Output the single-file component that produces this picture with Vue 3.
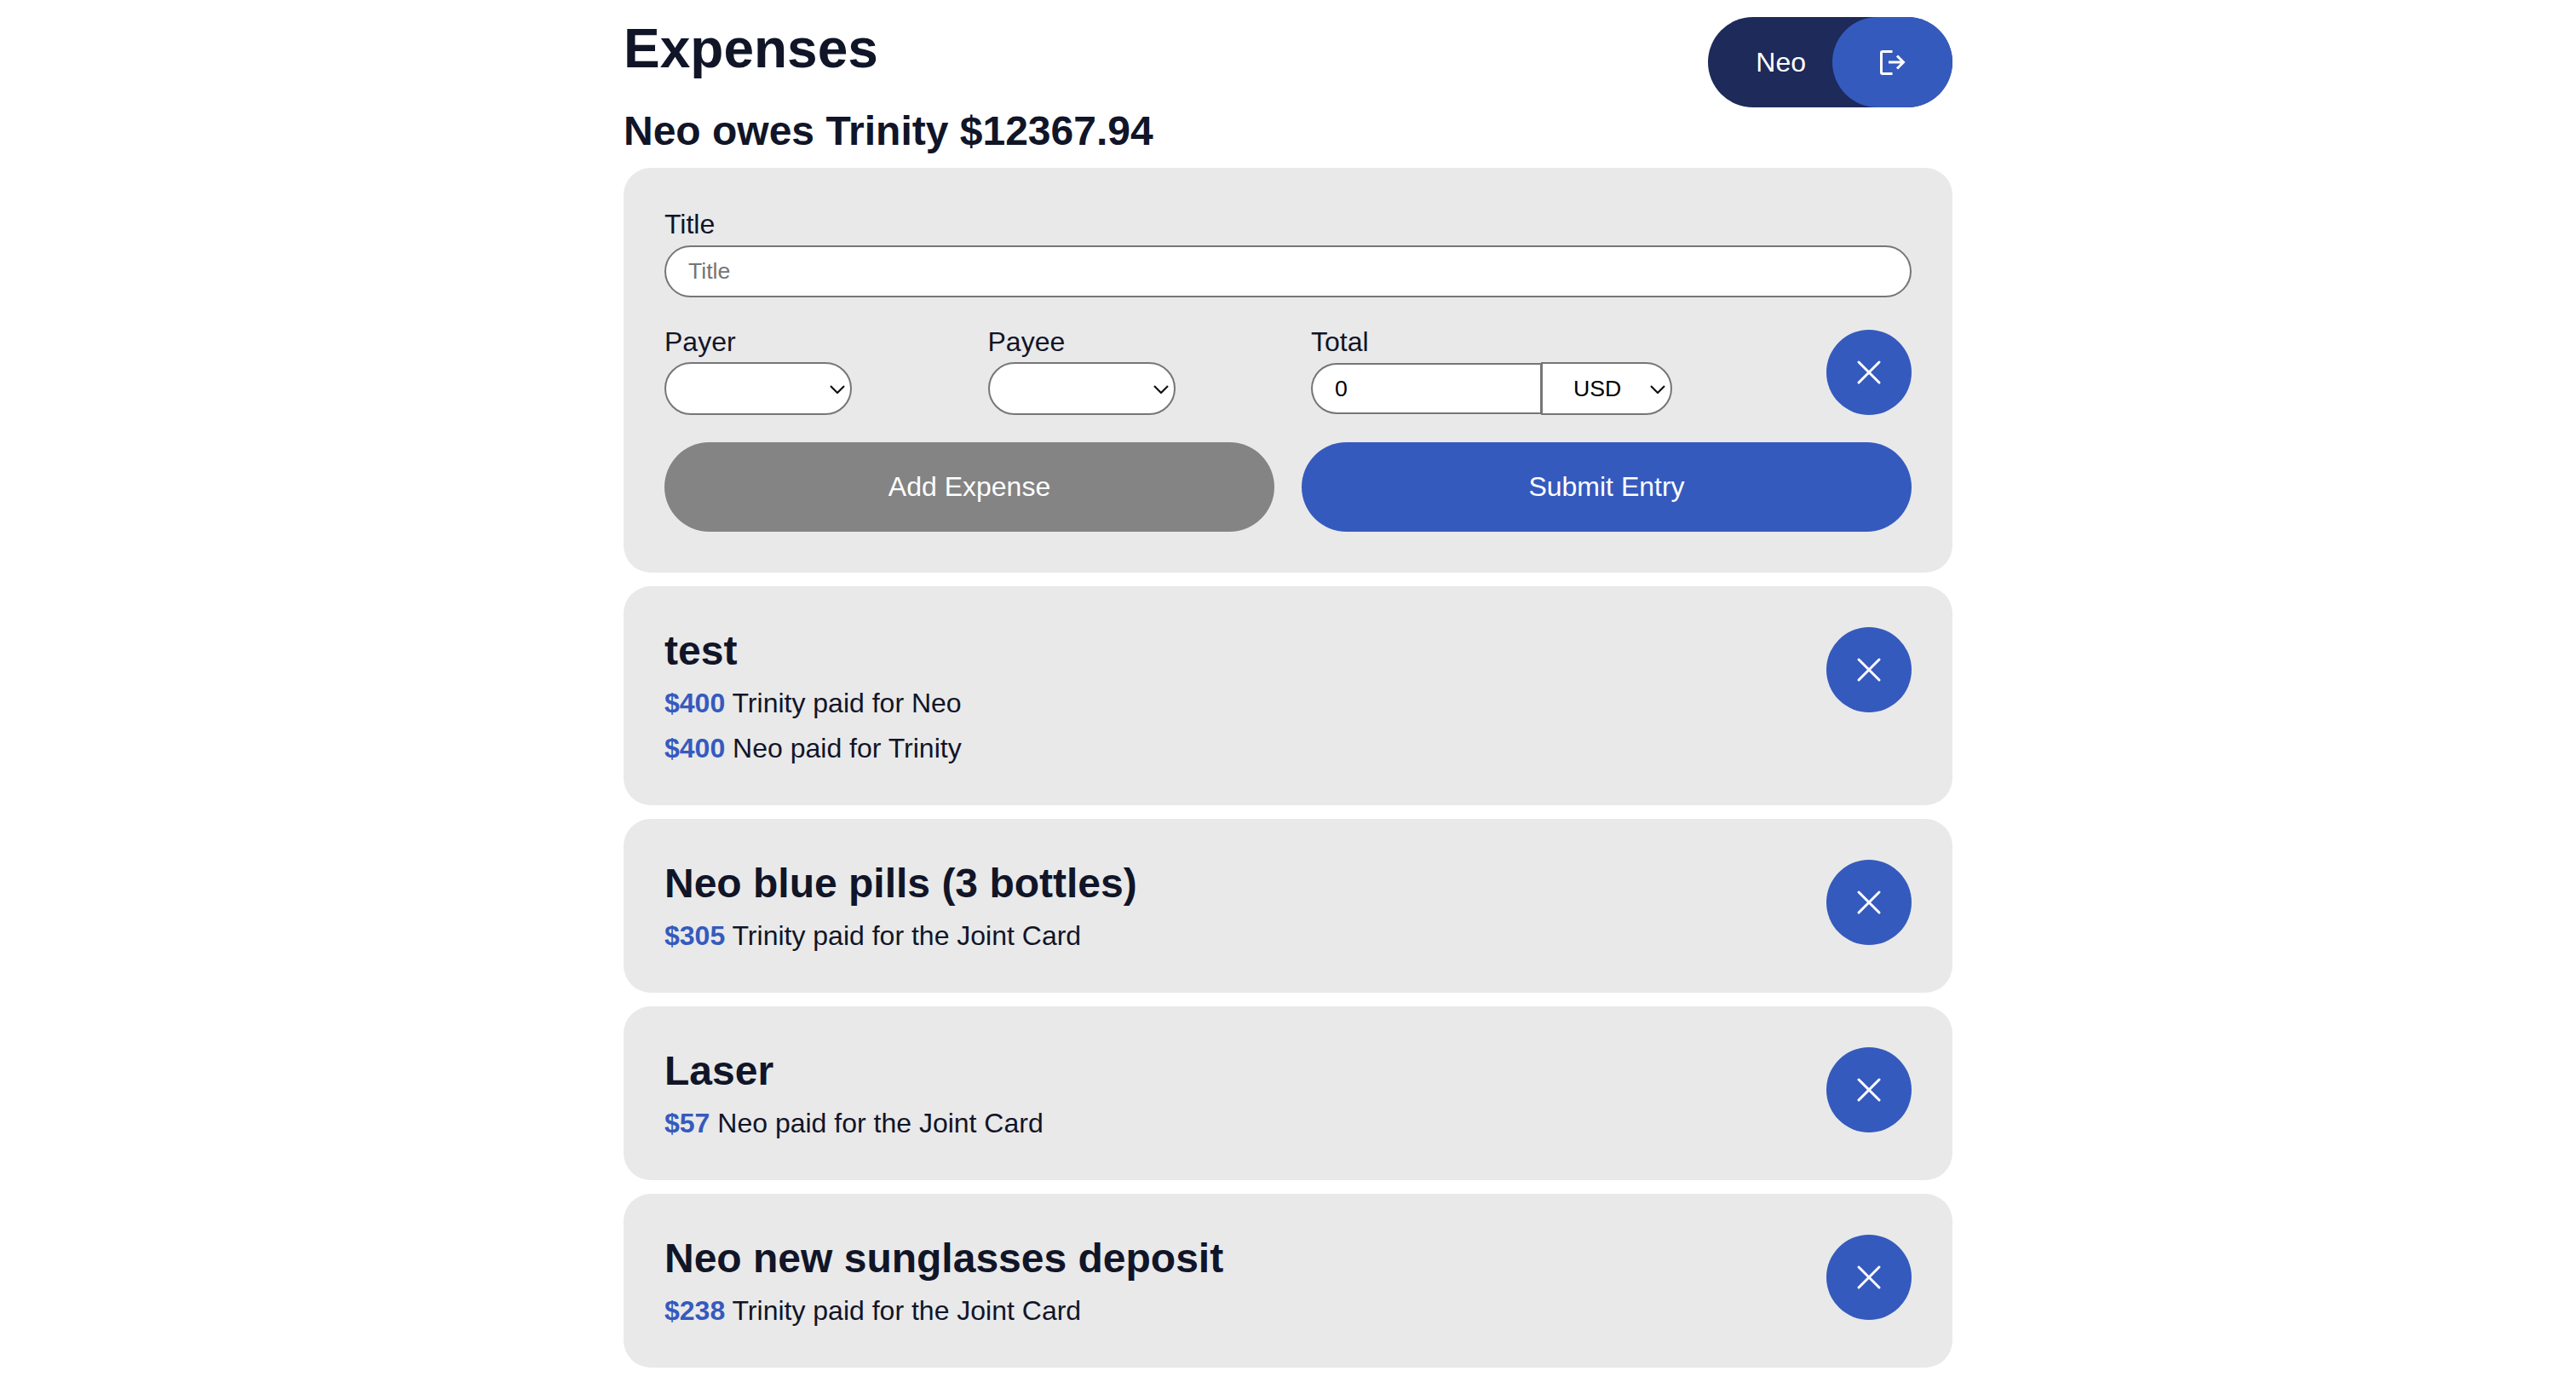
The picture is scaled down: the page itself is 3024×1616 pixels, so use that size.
<script setup>
const expenses = [
  {
    title: 'test',
    lines: [
      { amount: '$400', text: 'Trinity paid for Neo' },
      { amount: '$400', text: 'Neo paid for Trinity' }
    ]
  },
  {
    title: 'Neo blue pills (3 bottles)',
    lines: [{ amount: '$305', text: 'Trinity paid for the Joint Card' }]
  },
  {
    title: 'Laser',
    lines: [{ amount: '$57', text: 'Neo paid for the Joint Card' }]
  },
  {
    title: 'Neo new sunglasses deposit',
    lines: [{ amount: '$238', text: 'Trinity paid for the Joint Card' }]
  }
]
</script>

<template>
  <div class="page">
    <header class="top">
      <h1>Expenses</h1>
      <div class="user-pill">
        <span class="user-name">Neo</span>
        <button class="logout-btn" type="button" aria-label="Log out">
          <svg width="48" height="48" viewBox="0 0 48 48" fill="none" stroke="currentColor" stroke-width="3">
            <path d="M23.5 11.5H12a1.5 1.5 0 0 0-1.500 1.500v23a1.500 1.500 0 0 0 1.500 1.500h11.500" />
            <path d="M19 24h17M29 16.500l7.500 7.500-7.500 7.500" />
          </svg>
        </button>
      </div>
    </header>

    <h2 class="balance">Neo owes Trinity $12367.94</h2>

    <form class="card entry" @submit.prevent>
      <div class="field title-field">
        <label>Title</label>
        <input class="title-input" type="text" placeholder="Title" />
      </div>

      <div class="entry-row">
        <div class="field">
          <label>Payer</label>
          <div class="select-wrap">
            <select class="pill-select">
              <option></option>
            </select>
            <svg class="chevron" width="18" height="10" viewBox="0 0 18 10" fill="none" stroke="#111" stroke-width="2.2">
              <path d="M1 1l8 8 8-8" />
            </svg>
          </div>
        </div>
        <div class="field">
          <label>Payee</label>
          <div class="select-wrap">
            <select class="pill-select">
              <option></option>
            </select>
            <svg class="chevron" width="18" height="10" viewBox="0 0 18 10" fill="none" stroke="#111" stroke-width="2.2">
              <path d="M1 1l8 8 8-8" />
            </svg>
          </div>
        </div>
        <div class="field">
          <label>Total</label>
          <div class="total-group">
            <input class="total-input" type="text" value="0" />
            <div class="select-wrap">
              <select class="currency-select">
                <option>USD</option>
              </select>
              <svg class="chevron" width="18" height="10" viewBox="0 0 18 10" fill="none" stroke="#111" stroke-width="2.2">
                <path d="M1 1l8 8 8-8" />
              </svg>
            </div>
          </div>
        </div>
        <button class="round-btn" type="button" aria-label="Remove">
          <svg width="48" height="48" viewBox="0 0 24 24" fill="none" stroke="currentColor" stroke-width="1.5" stroke-linecap="round">
            <path d="M6 18L18 6M6 6l12 12" />
          </svg>
        </button>
      </div>

      <div class="entry-actions">
        <button class="action add" type="button">Add Expense</button>
        <button class="action submit" type="submit">Submit Entry</button>
      </div>
    </form>

    <section v-for="item in expenses" :key="item.title" class="card expense">
      <div class="expense-info">
        <h2>{{ item.title }}</h2>
        <p v-for="line in item.lines" :key="line.text">
          <strong>{{ line.amount }}</strong> {{ line.text }}
        </p>
      </div>
      <button class="round-btn" type="button" aria-label="Delete">
        <svg width="48" height="48" viewBox="0 0 24 24" fill="none" stroke="currentColor" stroke-width="1.5" stroke-linecap="round">
          <path d="M6 18L18 6M6 6l12 12" />
        </svg>
      </button>
    </section>
  </div>
</template>

<style>
html,
body {
  background: #fff;
  overflow: hidden;
}
</style>

<style scoped>
.page {
  width: 1560px;
  margin: 0 auto;
  padding-top: 20px;
  color: #111528;
  font-family: "Liberation Sans", Arial, sans-serif;
  font-size: 32px;
}

.top {
  display: flex;
  justify-content: space-between;
  align-items: flex-start;
}

h1 {
  margin: 0;
  font-size: 64px;
  font-weight: 700;
}

h2 {
  margin: 0;
  font-size: 48px;
  font-weight: 700;
}

.balance {
  margin-bottom: 16px;
}

.user-pill {
  display: flex;
  align-items: center;
  height: 106px;
  padding-left: 56px;
  background: #1d2a5a;
  border-radius: 53px;
  color: #fff;
}

.user-name {
  margin-right: 31px;
}

.logout-btn {
  display: flex;
  align-items: center;
  justify-content: center;
  width: 141px;
  height: 106px;
  padding: 0;
  border: none;
  border-radius: 53px;
  background: #355abe;
  color: #fff;
}

.card {
  margin-bottom: 16px;
  padding: 48px;
  background: #e9e9e9;
  border-radius: 32px;
}

.field label {
  display: block;
  margin-bottom: 5px;
}

.title-field {
  margin-bottom: 34px;
}

.title-field label {
  margin-bottom: 6px;
}

input,
select {
  box-sizing: border-box;
  margin: 0;
  border: 2px solid #767676;
  background: #fff;
  color: #000;
  font-family: inherit;
  font-size: 26.67px;
  outline: none;
  appearance: none;
}

.title-input {
  display: block;
  width: 100%;
  height: 61px;
  padding: 0 26px;
  border-radius: 31px;
}

.title-input::placeholder {
  color: #757575;
}

.entry-row {
  display: grid;
  grid-template-columns: 379.5px 379.5px 1fr 100px;
  align-items: end;
}

.select-wrap {
  position: relative;
  width: fit-content;
}

.chevron {
  position: absolute;
  top: 27px;
  right: 8px;
  pointer-events: none;
}

.pill-select {
  display: block;
  width: 220px;
  height: 62px;
  padding: 0 26px;
  border-radius: 31px;
}

.total-group {
  display: flex;
  align-items: center;
}

.total-input {
  width: 270px;
  height: 60px;
  padding: 0 26px;
  border-right-width: 1px;
  border-radius: 30px 0 0 30px;
}

.currency-select {
  display: block;
  width: 154px;
  height: 62px;
  padding: 0 0 0 36px;
  border-radius: 0 31px 31px 0;
}

.round-btn {
  display: flex;
  flex: none;
  align-items: center;
  justify-content: center;
  width: 100px;
  height: 100px;
  padding: 0;
  border: none;
  border-radius: 50%;
  background: #355abe;
  color: #fff;
}

.entry-actions {
  display: grid;
  grid-template-columns: 1fr 1fr;
  gap: 32px;
  margin-top: 32px;
}

.action {
  height: 105px;
  border: none;
  border-radius: 53px;
  color: #fff;
  font-family: inherit;
  font-size: 32px;
}

.add {
  background: #848484;
}

.submit {
  background: #355abe;
}

.expense {
  display: flex;
  justify-content: space-between;
  align-items: flex-start;
}

.expense h2 {
  margin-bottom: 16px;
}

.expense p {
  margin: 0 0 16px;
}

.expense p:last-child {
  margin-bottom: 0;
}

.expense strong {
  color: #355abe;
}
</style>
